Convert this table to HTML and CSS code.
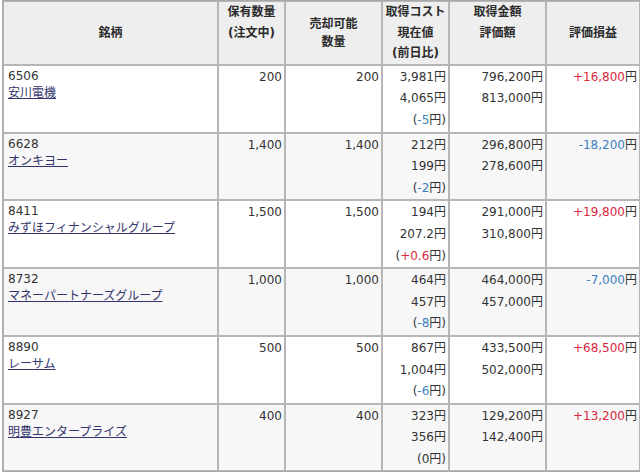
FILE: index.html
```html
<!DOCTYPE html>
<html lang="ja">
<head>
<meta charset="utf-8">
<title>保有銘柄</title>
<link rel="stylesheet" href="styles.css">
</head>
<body>
<div class="wrap">
<table class="port">
  <thead>
    <tr>
      <th class="c1 mid">銘柄</th>
      <th class="c2 top">保有数量<br>(注文中)</th>
      <th class="c3 mid tight">売却可能<br>数量</th>
      <th class="c4 top">取得コスト<br>現在値<br>(前日比)</th>
      <th class="c5 top">取得金額<br>評価額</th>
      <th class="c6 mid">評価損益</th>
    </tr>
  </thead>
  <tbody>
    <tr class="odd">
      <td class="name"><div class="code">6506</div><a href="#">安川電機</a></td>
      <td class="num">200</td>
      <td class="num">200</td>
      <td class="num lines">3,981円<br>4,065円<br>(<span class="minus">-5</span>円)</td>
      <td class="num lines">796,200円<br>813,000円</td>
      <td class="num"><span class="plus">+16,800</span>円</td>
    </tr>
    <tr class="even">
      <td class="name"><div class="code">6628</div><a href="#">オンキヨー</a></td>
      <td class="num">1,400</td>
      <td class="num">1,400</td>
      <td class="num lines">212円<br>199円<br>(<span class="minus">-2</span>円)</td>
      <td class="num lines">296,800円<br>278,600円</td>
      <td class="num"><span class="minus">-18,200</span>円</td>
    </tr>
    <tr class="odd">
      <td class="name"><div class="code">8411</div><a href="#">みずほフィナンシャルグループ</a></td>
      <td class="num">1,500</td>
      <td class="num">1,500</td>
      <td class="num lines">194円<br>207.2円<br>(<span class="plus">+0.6</span>円)</td>
      <td class="num lines">291,000円<br>310,800円</td>
      <td class="num"><span class="plus">+19,800</span>円</td>
    </tr>
    <tr class="even">
      <td class="name"><div class="code">8732</div><a href="#">マネーパートナーズグループ</a></td>
      <td class="num">1,000</td>
      <td class="num">1,000</td>
      <td class="num lines">464円<br>457円<br>(<span class="minus">-8</span>円)</td>
      <td class="num lines">464,000円<br>457,000円</td>
      <td class="num"><span class="minus">-7,000</span>円</td>
    </tr>
    <tr class="odd">
      <td class="name"><div class="code">8890</div><a href="#">レーサム</a></td>
      <td class="num">500</td>
      <td class="num">500</td>
      <td class="num lines">867円<br>1,004円<br>(<span class="minus">-6</span>円)</td>
      <td class="num lines">433,500円<br>502,000円</td>
      <td class="num"><span class="plus">+68,500</span>円</td>
    </tr>
    <tr class="even">
      <td class="name"><div class="code">8927</div><a href="#">明豊エンタープライズ</a></td>
      <td class="num">400</td>
      <td class="num">400</td>
      <td class="num lines">323円<br>356円<br>(0円)</td>
      <td class="num lines">129,200円<br>142,400円</td>
      <td class="num"><span class="plus">+13,200</span>円</td>
    </tr>
  </tbody>
</table>
</div>
</body>
</html>
```

FILE: styles.css
```css
html, body {
  margin: 0;
  padding: 0;
  background: #ffffff;
  overflow: hidden;
}
body {
  font-family: "DejaVu Sans", "Noto Sans CJK JP", sans-serif;
  font-size: 12px;
  color: #333333;
}
.wrap {
  padding-left: 2px;
  width: 660px;
}
.port {
  border-collapse: separate;
  border-spacing: 0;
  border: 1px solid #a9a9a9;
  table-layout: fixed;
  width: 639px;
}
.port th,
.port td {
  box-sizing: border-box;
  border: 1px solid #b6b6b6;
  padding: 0 3px;
}
.port th {
  background: #eeeeee;
  font-weight: bold;
  color: #2b2b2b;
  text-align: center;
  line-height: 20.6px;
  white-space: nowrap;
  padding: 0;
  height: 62px;
}
.port th.top { vertical-align: top; }
.port th.mid { vertical-align: middle; }
.port th.tight { line-height: 18px; }
.c1 { width: 215px; }
.c2 { width: 67px; }
.c3 { width: 97px; }
.c4 { width: 67px; }
.c5 { width: 97px; }
.c6 { width: 94px; }

.port td {
  vertical-align: top;
  line-height: 21.6px;
  padding-top: 1px;
  padding-right: 2px;
  height: 65.7px;
}
.odd td { background: #ffffff; }
.even td { background: #f7f7f7; }
.port td.num {
  text-align: right;
  white-space: nowrap;
}
.port td.name {
  line-height: 17px;
  padding-top: 2px;
  padding-left: 4px;
}
.name a {
  color: #34346c;
  text-decoration: underline;
}
.plus { color: #d9283d; }
.minus { color: #3b7fc1; }
```
